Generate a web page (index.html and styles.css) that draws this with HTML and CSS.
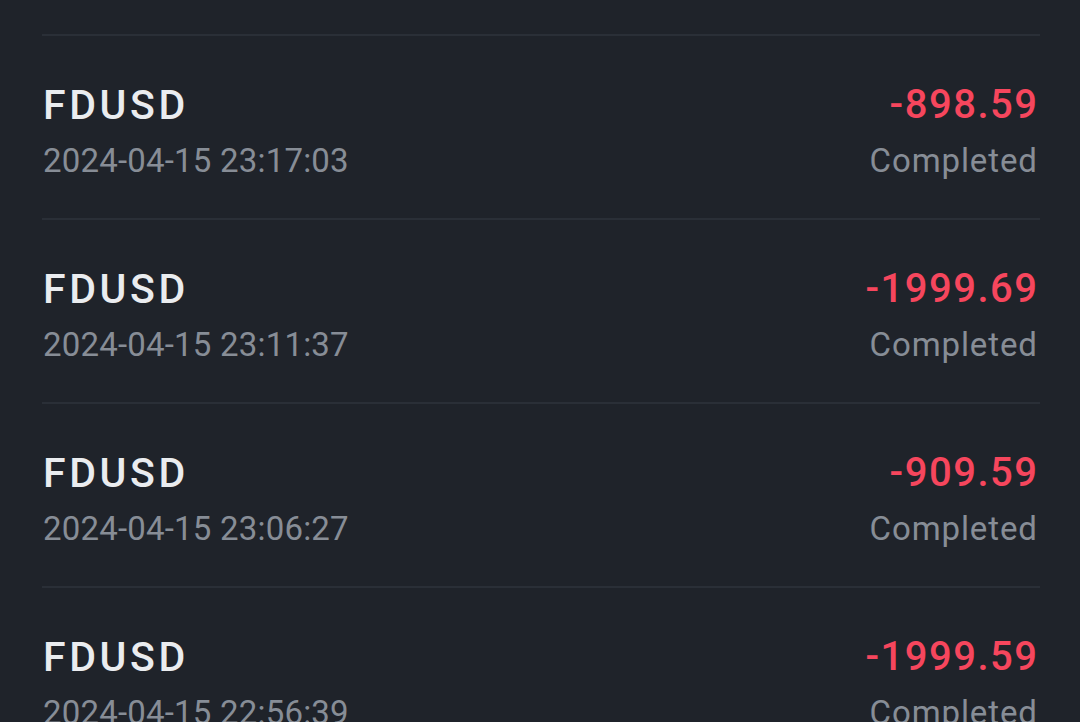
FILE: index.html
```html
<!DOCTYPE html>
<html>
<head>
<meta charset="utf-8">
<link rel="stylesheet" href="styles.css">
</head>
<body>
<div class="list">
  <div class="top-spacer"></div>
  <div class="row">
    <div class="col left"><div class="coin">FDUSD</div><div class="time">2024-04-15 23:17:03</div></div>
    <div class="col right"><div class="amount">-898.59</div><div class="status">Completed</div></div>
  </div>
  <div class="row">
    <div class="col left"><div class="coin">FDUSD</div><div class="time">2024-04-15 23:11:37</div></div>
    <div class="col right"><div class="amount">-1999.69</div><div class="status">Completed</div></div>
  </div>
  <div class="row">
    <div class="col left"><div class="coin">FDUSD</div><div class="time">2024-04-15 23:06:27</div></div>
    <div class="col right"><div class="amount">-909.59</div><div class="status">Completed</div></div>
  </div>
  <div class="row">
    <div class="col left"><div class="coin">FDUSD</div><div class="time">2024-04-15 22:56:39</div></div>
    <div class="col right"><div class="amount">-1999.59</div><div class="status">Completed</div></div>
  </div>
</div>
</body>
</html>
```
FILE: styles.css
```css
html, body {
  margin: 0;
  padding: 0;
  background: #1f232a;
  width: 1080px;
  height: 722px;
  overflow: hidden;
  font-family: Roboto, "Noto Sans", sans-serif;
}
.list {
  padding: 0 40px 0 42px;
}
.top-spacer {
  height: 34px;
}
.row {
  border-top: 2px solid #2a2f37;
  height: 184px;
  display: flex;
  justify-content: space-between;
  align-items: flex-start;
  box-sizing: border-box;
}
.col {
  display: flex;
  flex-direction: column;
  padding-top: 43px;
}
.left {
  padding-left: 1px;
}
.right {
  align-items: flex-end;
  padding-right: 3px;
}
.coin {
  font-size: 41px;
  font-weight: 500;
  color: #eaecef;
  line-height: 52px;
  letter-spacing: 3.6px;
}
.time {
  font-size: 33px;
  color: #878d96;
  line-height: 60px;
  letter-spacing: 0.2px;
}
.amount {
  font-size: 40px;
  font-weight: 500;
  color: #f6465d;
  line-height: 52px;
  letter-spacing: 1.5px;
  margin-right: -1.5px;
}
.status {
  font-size: 33px;
  color: #878d96;
  line-height: 60px;
  letter-spacing: 0.9px;
  margin-right: -0.9px;
}
```
